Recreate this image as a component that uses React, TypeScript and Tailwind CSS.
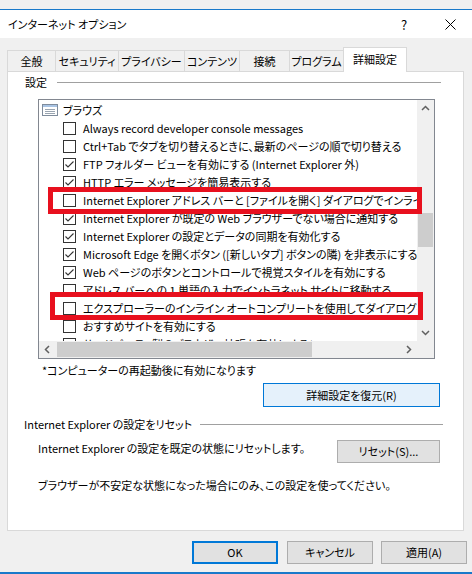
import React from 'react';

const rows: { t: string; c: boolean }[] = [
  { t: 'Always record developer console messages', c: false },
  { t: 'Ctrl+Tab でタブを切り替えるときに、最新のページの順で切り替える', c: false },
  { t: 'FTP フォルダー ビューを有効にする (Internet Explorer 外)', c: true },
  { t: 'HTTP エラー メッセージを簡易表示する', c: true },
  { t: 'Internet Explorer アドレス バーと [ファイルを開く] ダイアログでインライン オートコンプリートを使用する', c: false },
  { t: 'Internet Explorer が既定の Web ブラウザーでない場合に通知する', c: true },
  { t: 'Internet Explorer の設定とデータの同期を有効化する', c: true },
  { t: 'Microsoft Edge を開くボタン ([新しいタブ] ボタンの隣) を非表示にする', c: true },
  { t: 'Web ページのボタンとコントロールで視覚スタイルを有効にする', c: true },
  { t: 'アドレス バーへの 1 単語の入力でイントラネット サイトに移動する', c: false },
  { t: 'エクスプローラーのインライン オートコンプリートを使用してダイアログを実行する', c: false },
  { t: 'おすすめサイトを有効にする', c: false },
  { t: 'サードパーティ製のブラウザー拡張を有効にする*', c: true },
];

const tabs = [
  { t: '全般', w: 'w-[49px]' },
  { t: 'セキュリティ', w: 'w-[64px]' },
  { t: 'プライバシー', w: 'w-[67px]' },
  { t: 'コンテンツ', w: 'w-[56px]' },
  { t: '接続', w: 'w-[51px]' },
  { t: 'プログラム', w: 'w-[55px]' },
];

function Checkbox({ checked }: { checked: boolean }) {
  return (
    <div className="w-[13px] h-[13px] border border-[#333333] bg-white flex items-center justify-center shrink-0">
      {checked && (
        <svg width="11" height="11" viewBox="0 0 11 11">
          <path d="M1.5 5.5 L4 8 L9.5 2.5" fill="none" stroke="#333333" strokeWidth="1.1" />
        </svg>
      )}
    </div>
  );
}

function Chevron({ dir }: { dir: 'up' | 'down' | 'left' | 'right' }) {
  const d = {
    up: 'M1 5 L4.5 1.5 L8 5',
    down: 'M1 2 L4.5 5.5 L8 2',
    left: 'M5 1 L1.5 4.5 L5 8',
    right: 'M2 1 L5.5 4.5 L2 8',
  }[dir];
  const w = dir === 'up' || dir === 'down' ? 9 : 7;
  const h = dir === 'up' || dir === 'down' ? 7 : 9;
  return (
    <svg width={w} height={h} viewBox={`0 0 ${w} ${h}`}>
      <path d={d} fill="none" stroke="#606060" strokeWidth="1.5" />
    </svg>
  );
}

function GroupTitle({ text, lineFrom }: { text: string; lineFrom: string }) {
  return (
    <div className="flex items-center h-[14px]">
      <span className="whitespace-nowrap">{text}</span>
      <div className={`${lineFrom} flex-1 h-px bg-[#a0a0a0]`} />
    </div>
  );
}

export default function App() {
  return (
    <div className="w-[472px] h-[574px] bg-[#f0f0f0] flex flex-col text-[11px] leading-none text-black font-['Noto_Sans_CJK_JP',sans-serif] [font-feature-settings:'palt'] overflow-hidden">
      <div className="h-[9px] shrink-0" />
      <div className="h-px bg-[#1979ca] shrink-0" />

      {/* title bar */}
      <div className="h-[28px] bg-white flex items-center pl-[8px] shrink-0">
        <span className="flex-1">インターネット オプション</span>
        <span className="w-[10px] text-center mr-[36px] text-[13px]">?</span>
        <svg width="11" height="11" viewBox="0 0 11 11" className="mr-[16px]">
          <path d="M0.5 0.5 L10.5 10.5 M10.5 0.5 L0.5 10.5" stroke="#000" strokeWidth="1" />
        </svg>
      </div>

      {/* body */}
      <div className="flex-1 flex flex-col px-[7px] pt-[9px]">
        {/* tabs */}
        <div className="flex items-end h-[24px]">
          {tabs.map((tab) => (
            <div
              key={tab.t}
              className={`${tab.w} h-[21px] border border-b-0 border-[#d9d9d9] -ml-px first:ml-0 flex items-center justify-center bg-[#f0f0f0] whitespace-nowrap`}
            >
              {tab.t}
            </div>
          ))}
          <div className="w-[64px] h-[25px] -mb-px -ml-px border border-b-0 border-[#d9d9d9] bg-white flex items-center justify-center relative z-10 pb-[2px] whitespace-nowrap">
            詳細設定
          </div>
        </div>

        {/* panel */}
        <div className="w-[457px] h-[460px] bg-white border border-[#d9d9d9] flex flex-col">
          <div className="pl-[17px] pr-[22px] pt-[3px]">
            <GroupTitle text="設定" lineFrom="ml-[10px]" />
          </div>

          {/* list box */}
          <div className="ml-[30px] mt-[10px] w-[397px] h-[260px] border border-[#828790] relative flex flex-col">
            <div className="flex flex-1 min-h-0">
              <div className="w-[378px] overflow-hidden pt-[1px]">
                <div className="h-[18px] flex items-center pl-[3px] gap-[5px] whitespace-nowrap">
                  <svg width="16" height="12" viewBox="0 0 16 12">
                    <rect x="0.5" y="0.5" width="15" height="11" fill="#fff" stroke="#7f8c9c" />
                    <rect x="1" y="1" width="14" height="2" fill="#a9c4e4" />
                    <path d="M3 5.5 H13 M3 7.5 H13 M3 9.5 H13" stroke="#9aa5b1" strokeWidth="1" />
                  </svg>
                  <span>ブラウズ</span>
                </div>
                {rows.map((r) => (
                  <div key={r.t} className="h-[18px] flex items-center pl-[24px] gap-[7px] whitespace-nowrap">
                    <Checkbox checked={r.c} />
                    <span>{r.t}</span>
                  </div>
                ))}
              </div>
              {/* vertical scrollbar */}
              <div className="w-[17px] bg-[#f0f0f0] flex flex-col items-center">
                <div className="h-[17px] flex items-center justify-center">
                  <Chevron dir="up" />
                </div>
                <div className="flex-1 w-full px-[1px] pt-[96px]">
                  <div className="h-[34px] bg-[#cdcdcd]" />
                </div>
                <div className="h-[17px] flex items-center justify-center">
                  <Chevron dir="down" />
                </div>
              </div>
            </div>
            {/* horizontal scrollbar */}
            <div className="h-[17px] flex bg-[#f0f0f0]">
              <div className="w-[17px] flex items-center justify-center">
                <Chevron dir="left" />
              </div>
              <div className="w-[344px] py-[1px] pl-[1px]">
                <div className="w-[255px] h-full bg-[#cdcdcd]" />
              </div>
              <div className="w-[17px] flex items-center justify-center">
                <Chevron dir="right" />
              </div>
              <div className="w-[17px]" />
            </div>

            {/* red highlight boxes */}
            <div className="absolute left-[9px] top-[87px] w-[374px] h-[27px] border-[5px] border-[#e8101e]" />
            <div className="absolute left-[11px] top-[192px] w-[373px] h-[28px] border-[5px] border-[#e8101e]" />
          </div>

          <div className="pl-[34px] mt-[4px] h-[14px] flex items-center">*コンピューターの再起動後に有効になります</div>

          <div className="flex justify-end pr-[23px] mt-[6px]">
            <button className="w-[177px] h-[24px] bg-[#e5f1fb] border border-[#0078d7] flex items-center justify-center">
              詳細設定を復元(R)
            </button>
          </div>

          <div className="pl-[16px] pr-[20px] mt-[10px]">
            <GroupTitle text="Internet Explorer の設定をリセット" lineFrom="ml-[8px]" />
          </div>

          <div className="flex items-start pl-[30px] pr-[23px] mt-[9px]">
            <span className="flex-1 pt-[3px]">Internet Explorer の設定を既定の状態にリセットします。</span>
            <button className="w-[103px] h-[23px] bg-[#e1e1e1] border border-[#adadad] flex items-center justify-center">
              リセット(S)...
            </button>
          </div>

          <div className="pl-[30px] mt-[17px]">ブラウザーが不安定な状態になった場合にのみ、この設定を使ってください。</div>
        </div>

        {/* dialog buttons */}
        <div className="flex justify-end gap-[8px] mt-[10px] -mr-[2px]">
          <button className="w-[86px] h-[23px] bg-[#e1e1e1] border-2 border-[#0078d7] flex items-center justify-center mr-px">
            OK
          </button>
          <button className="w-[86px] h-[23px] bg-[#e1e1e1] border border-[#adadad] flex items-center justify-center">
            キャンセル
          </button>
          <button className="w-[86px] h-[23px] bg-[#e1e1e1] border border-[#adadad] flex items-center justify-center">
            適用(A)
          </button>
        </div>
      </div>

      <div className="h-[2px] bg-[#1979ca] shrink-0" />
    </div>
  );
}
